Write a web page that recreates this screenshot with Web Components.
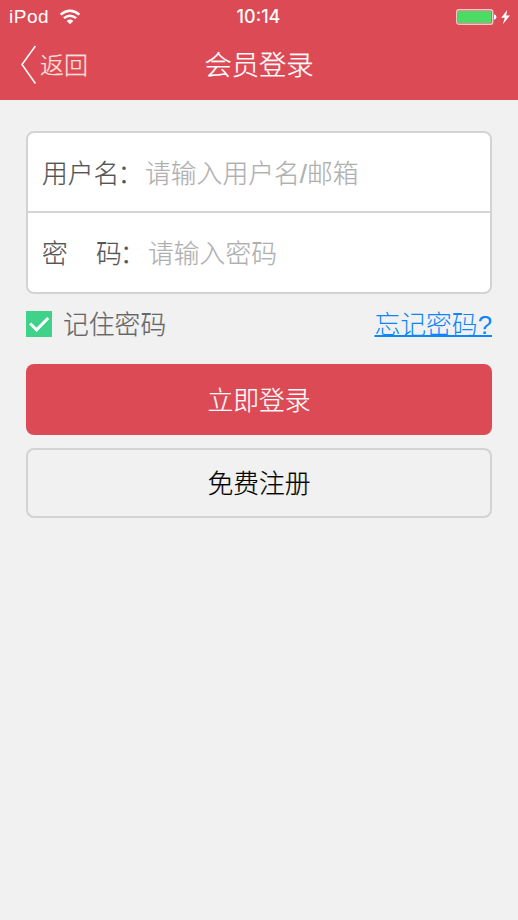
<!DOCTYPE html>
<html lang="zh-CN">
<head>
<meta charset="utf-8">
<title>会员登录</title>
<style>
html,body{margin:0;height:100%}
body{background:#f1f1f1;font-family:"Liberation Sans","Noto Sans CJK SC",sans-serif;font-weight:300;overflow:hidden}
</style>
</head>
<body>
<login-page></login-page>
<script>
function define(name, html) {
  const t = document.createElement('template');
  t.innerHTML = html;
  customElements.define(name, class extends HTMLElement {
    constructor() {
      super();
      this.attachShadow({ mode: 'open' }).append(t.content.cloneNode(true));
    }
  });
}

define('status-bar', `
<style>
:host{display:grid;grid-template-columns:1fr auto 1fr;align-items:center;height:33px;color:#fff;font-weight:400;padding:0 7px 0 9px}
.l{display:flex;align-items:center;gap:10px;font-size:19px}
.l span{letter-spacing:.5px}
.t{font:500 18px/33px Inter,sans-serif;letter-spacing:0;padding-right:3px}
.r{display:flex;align-items:center;justify-content:flex-end}
svg{display:block}
</style>
<div class="l"><span>iPod</span>
<svg width="22" height="16" viewBox="0 0 22 16" fill="none" stroke="#fff" stroke-width="2.4"><path d="M1.6 5.6Q11-2.2 20.4 5.6M4.9 9.2Q11 4.1 17.1 9.2"/><path d="M11 15.2L7.7 11.9Q11 9.2 14.3 11.9Z" fill="#fff" stroke="none"/></svg></div>
<div class="t">10:14</div>
<div class="r"><svg width="55" height="18" viewBox="0 0 55 18"><rect x=".7" y="1.7" width="36" height="14.6" rx="2.4" fill="none" stroke="#f6c5c9" stroke-width="1.4"/><rect x="2" y="3" width="33.4" height="12" rx="1" fill="#4cdb64"/><path d="M38 6.2Q40.5 7 40.5 9T38 11.8Z" fill="#fff"/><path d="M51.2 2L45.2 9.8H48.8L46.8 16.2L54 7.6H50.2Z" fill="#fff"/></svg></div>`);

define('nav-bar', `
<style>
:host{display:grid;grid-template-columns:1fr auto 1fr;align-items:center;height:67px;padding:0 20px;color:#fff}
.b{display:flex;align-items:center;gap:3px;font-size:24px;line-height:62px;color:#fbe1df;padding-bottom:5px;-webkit-text-stroke:.25px}
.b span{padding-top:2px}
.h{font-size:27.3px;line-height:62px;padding-bottom:3px;-webkit-text-stroke:.25px}
svg{display:block}
</style>
<div class="b"><svg width="17" height="40" viewBox="0 0 17 40" fill="none" stroke="#fff" stroke-width="1.5"><path d="M15.4 1L2 19.5L15.4 38.5"/></svg><span><slot name="back"></slot></span></div>
<div class="h"><slot></slot></div>`);

define('field-group', `
<style>
:host{display:block;box-sizing:border-box;background:#fff;border:2px solid #d3d3d3;border-radius:8px;overflow:hidden;height:163px}
::slotted(:not(:first-child)){border-top:2px solid #d3d3d3}
</style><slot></slot>`);

define('form-field', `
<style>
:host{display:flex;align-items:center;height:78px;padding-left:14px;font-size:25.8px;line-height:76px;white-space:pre;color:#555;-webkit-text-stroke:.2px}
span{padding-top:3px}
.p{color:#b0b0b0}
</style><span class="k"><slot name="label"></slot></span><span class="p"><slot></slot></span>`);

define('check-box', `
<style>
:host{display:flex;align-items:center;gap:10px;color:#666;font-size:25.8px;line-height:38px;-webkit-text-stroke:.2px}
svg{display:block}
span{padding-top:2px}
</style><svg width="27" height="26" viewBox="0 0 27 26"><path d="M0 0H26V26H0Z" fill="#3ed28b"/><path d="M4.2 12.5L10.6 18.9L22.2 7" fill="none" stroke="#fff" stroke-width="3"/></svg><span><slot></slot></span>`);

define('text-link', `
<style>
:host{display:block;color:#0c86f8;font-size:25.8px;line-height:38px;padding-top:2px}
span{text-decoration:underline;text-decoration-thickness:1.5px;text-underline-offset:1px;text-decoration-skip-ink:none}
</style><span><slot></slot></span>`);

define('action-button', `
<style>
:host{display:flex;justify-content:center;align-items:center;box-sizing:border-box;height:70px;border:2px solid #d3d3d3;border-radius:8px;font-size:25.8px;line-height:38px;padding-top:1px;color:#000;-webkit-text-stroke:.2px}
:host([primary]){background:#dc4b55;border:0;color:#fff;height:71px;padding-top:2px}
</style><slot></slot>`);

define('login-page', `
<style>
:host{display:block;width:518px;height:920px;background:#f1f1f1}
header{background:#dc4b55;height:100px}
main{padding:31px 26px 0;display:flex;flex-direction:column}
.row{display:flex;justify-content:space-between;align-items:center;height:60px;margin-bottom:10px}
.buttons{display:flex;flex-direction:column;gap:13px}
.user{display:inline-block;width:103px}
.pass{display:inline-flex;width:106px}
.first{width:54px}
.colon{margin-left:-2px}
</style>
<header><status-bar></status-bar><nav-bar><span slot="back">返回</span>会员登录</nav-bar></header>
<main>
<field-group>
<form-field><span slot="label" class="user">用户名<span class="colon">：</span></span>请输入用户名/邮箱</form-field>
<form-field><span slot="label" class="pass"><span class="first">密</span><span>码<span class="colon">：</span></span></span>请输入密码</form-field>
</field-group>
<div class="row"><check-box>记住密码</check-box><text-link>忘记密码?</text-link></div>
<div class="buttons"><action-button primary>立即登录</action-button><action-button>免费注册</action-button></div>
</main>`);
</script>
</body>
</html>
